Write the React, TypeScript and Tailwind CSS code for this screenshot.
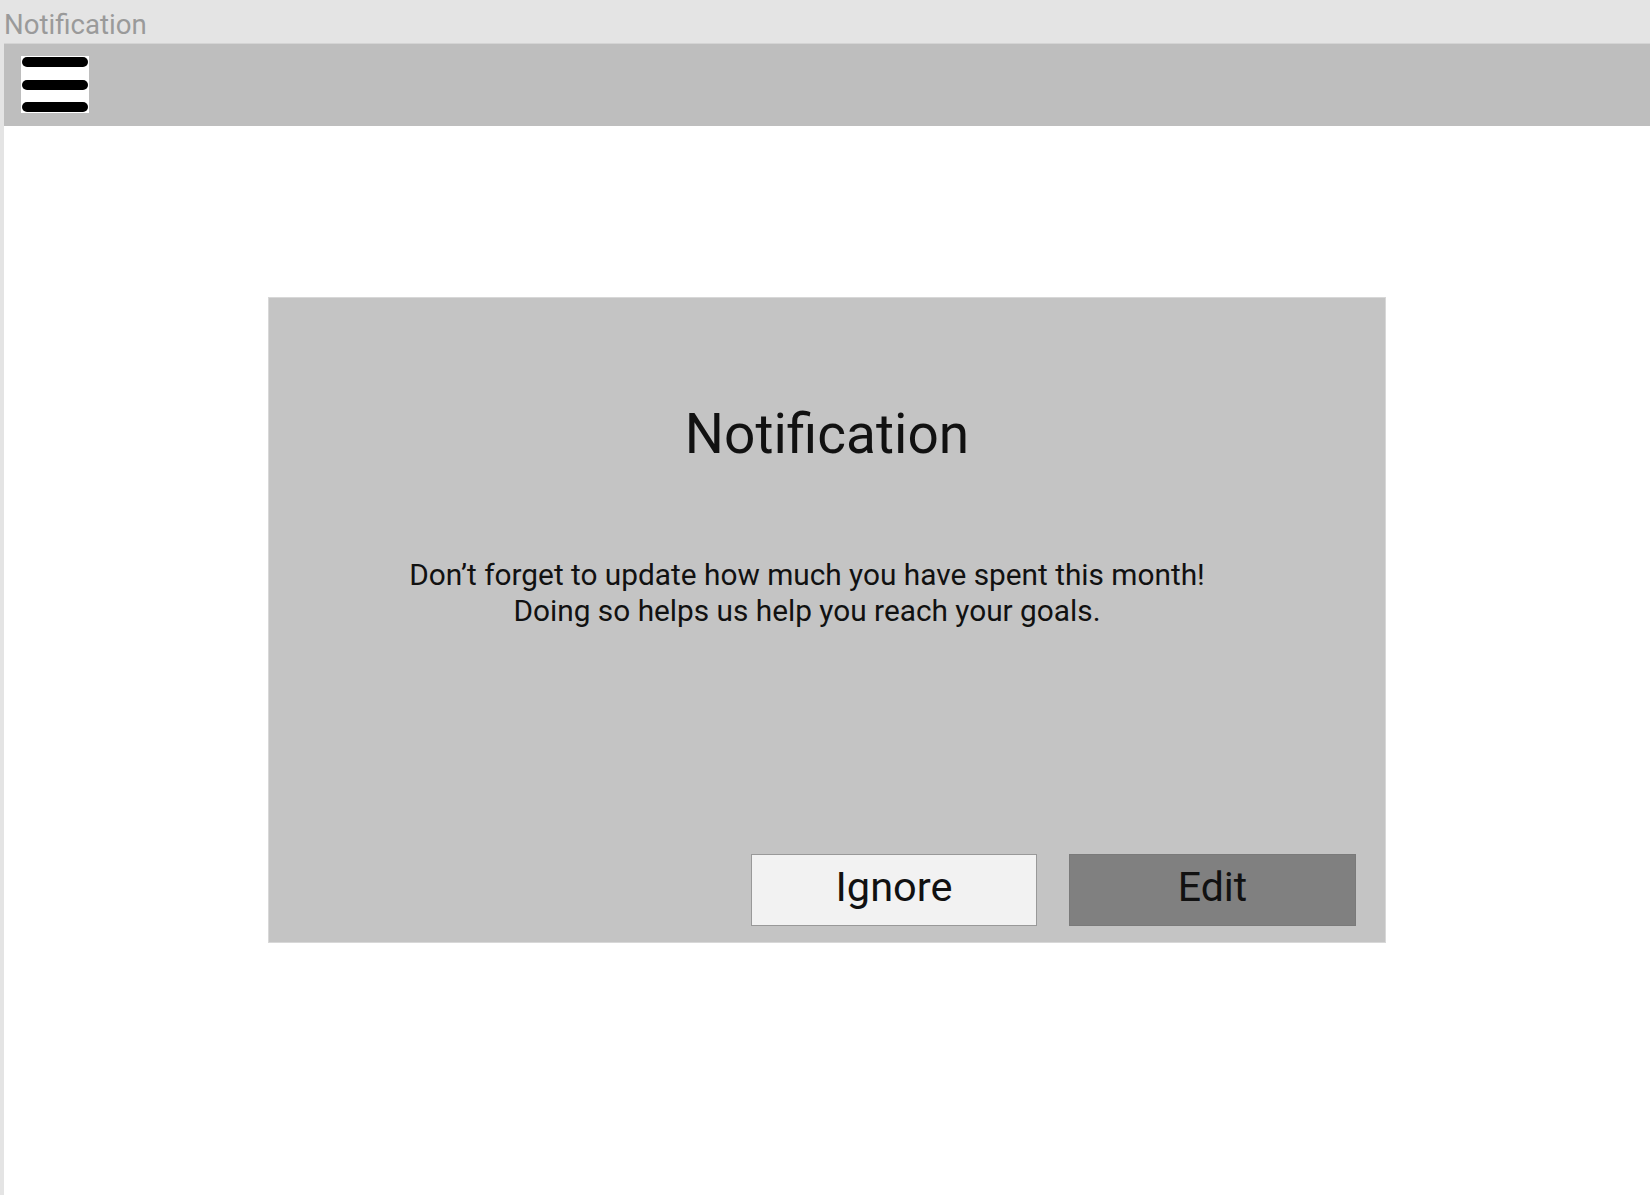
export default function App() {
  return (
    <div className="flex h-[1195px] w-[1650px] flex-col bg-[#e4e4e4] font-['Roboto',sans-serif]">
      {/* window title strip */}
      <div className="flex h-[43px] shrink-0 items-center pl-[4px] pt-[6px] text-[27.6px] leading-none text-[#9a9a9a]">
        Notification
      </div>

      <div className="ml-[4px] flex flex-1 flex-col bg-white">
        {/* app header */}
        <div className="flex h-[83px] shrink-0 items-start border-t border-[#d4d4d4] bg-[#bebebe] pl-[17px] pt-[12px]">
          <div className="flex h-[57px] w-[68px] flex-col justify-between bg-white px-[1px] py-[1px]">
            <span className="h-[10px] w-full rounded-full bg-black" />
            <span className="h-[10px] w-full rounded-full bg-black" />
            <span className="h-[10px] w-full rounded-full bg-black" />
          </div>
        </div>

        {/* notification dialog */}
        <div className="ml-[264px] mt-[171px] flex h-[646px] w-[1118px] flex-col border border-[#d8d8d8] bg-[#c4c4c4]">
          <h1 className="mt-[104px] text-center text-[55px] leading-[64px] text-[#111]">Notification</h1>
          <p className="mr-[40px] mt-[91px] text-center text-[29.8px] leading-[36px] text-[#111]">
            Don’t forget to update how much you have spent this month!
            <br />
            Doing so helps us help you reach your goals.
          </p>
          <div className="mt-auto flex justify-end gap-[32px] pb-[16px] pr-[29px]">
            <button className="flex h-[72px] w-[286px] items-center justify-center border border-[#999] bg-[#f2f2f2] pb-[6px] text-[41.5px] text-[#111]">
              Ignore
            </button>
            <button className="flex h-[72px] w-[287px] items-center justify-center border border-[#7a7a7a] bg-[#808080] pb-[4px] text-[41px] text-[#111]">
              Edit
            </button>
          </div>
        </div>
      </div>
    </div>
  );
}
